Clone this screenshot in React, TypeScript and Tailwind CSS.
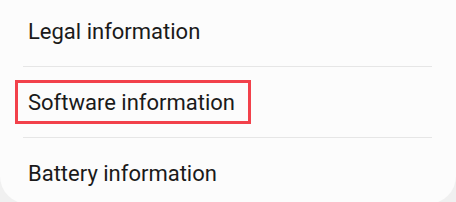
import React from "react";

const rows = ["Legal information", "Software information", "Battery information"];

const App = () => {
  return (
    <div className="w-[456px] h-[202px] overflow-hidden bg-[#f0f0f0]" style={{ fontFamily: "Roboto, 'Noto Sans', sans-serif" }}>
      <div className="h-[204px] bg-[#fcfcfc] rounded-b-[28px]">
        {/* Legal */}
        <div className="h-[66px] flex items-center pl-[28px] pb-[4px] text-[22px] text-[#1a1a1a]">
          {rows[0]}
        </div>
        <div className="mx-[23px] w-[409px] h-px bg-[#e6e6e6]" />

        {/* Software, highlighted */}
        <div className="relative h-[70px] flex items-center pl-[28px] text-[22px] text-[#1a1a1a]">
          <span>{rows[1]}</span>
          <div className="absolute left-[15px] top-[13px] w-[236px] h-[44px] border-[3px] border-[#f2414b]" />
        </div>
        <div className="mx-[23px] w-[409px] h-px bg-[#e6e6e6]" />

        {/* Battery */}
        <div className="h-[71px] flex items-center pl-[28px] text-[22px] text-[#1a1a1a]">
          {rows[2]}
        </div>
      </div>
    </div>
  );
};

export default App;
